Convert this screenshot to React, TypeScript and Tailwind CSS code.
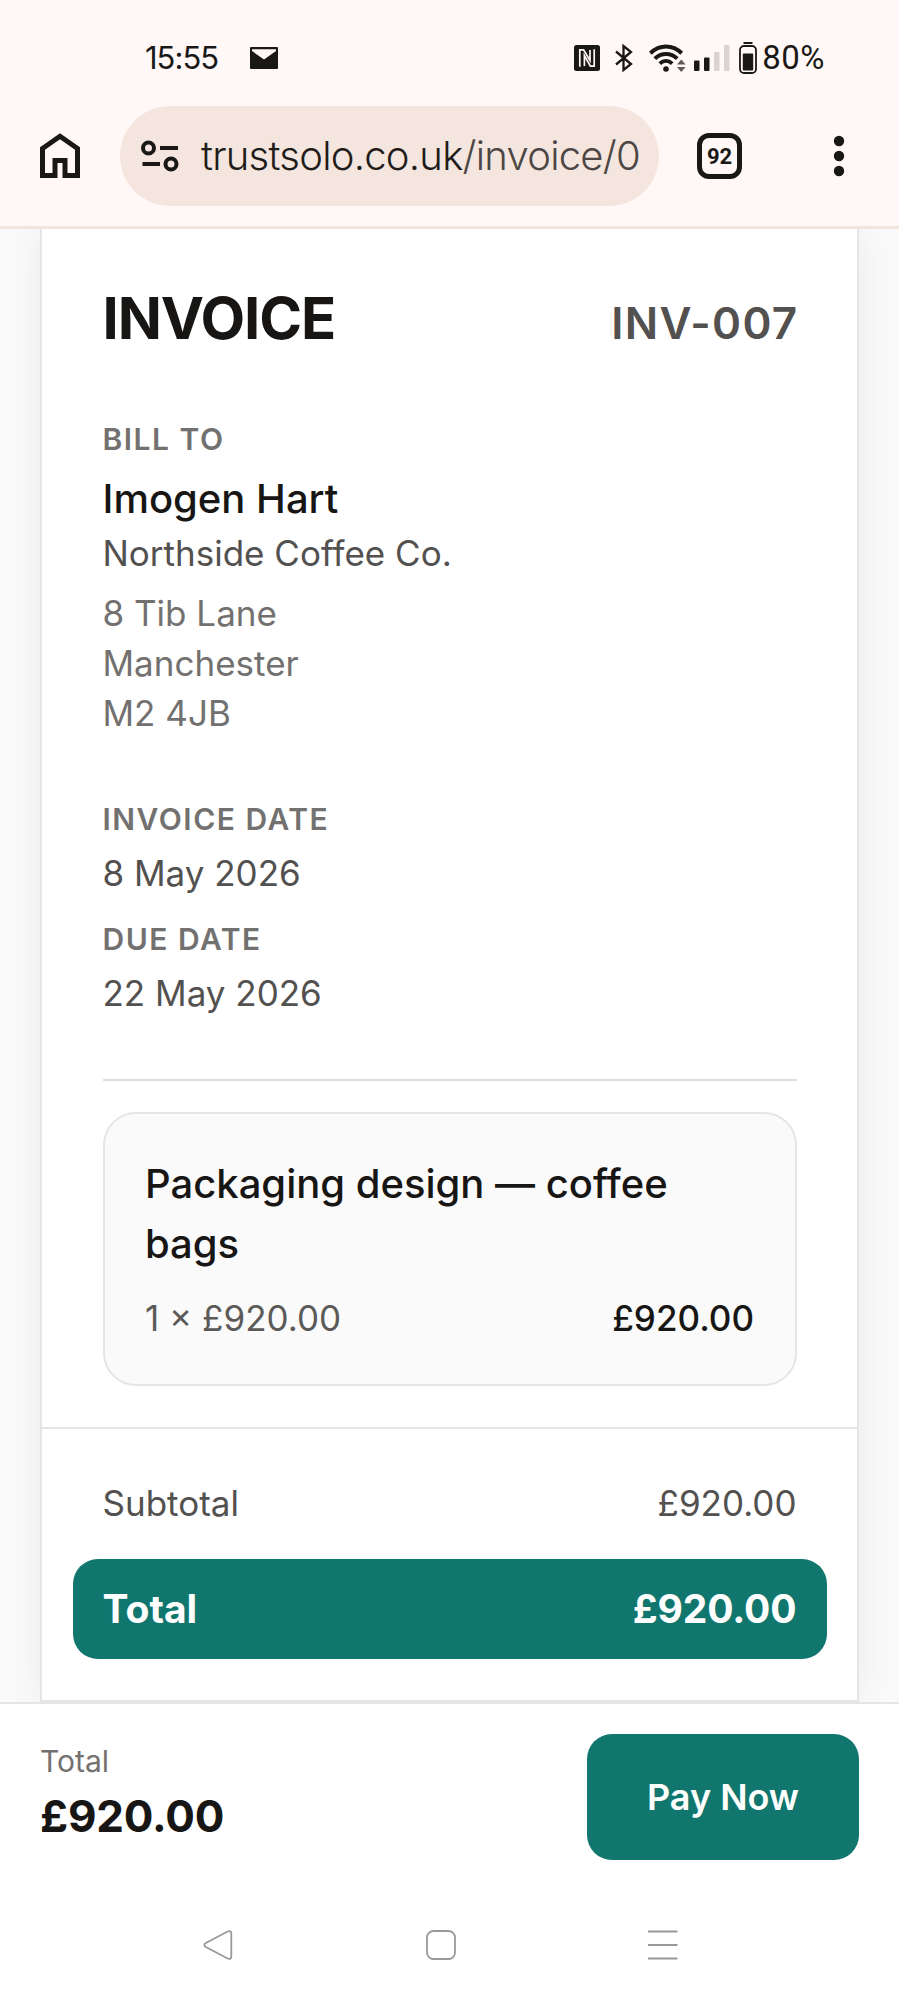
import type { ReactNode } from "react";

const addressLines = ["8 Tib Lane", "Manchester", "M2 4JB"];

const dates = [
  { label: "Invoice date", value: "8 May 2026" },
  { label: "Due date", value: "22 May 2026" },
];

const Label = ({ children, className = "" }: { children: ReactNode; className?: string }) => (
  <p className={`text-[30px] leading-10 font-semibold tracking-[1.5px] uppercase text-[#737170] ${className}`}>{children}</p>
);

const StatusBar = () => (
  <div className="flex items-center h-[106px] pt-[9px] pl-[145px] pr-[74px] text-[#1a1816]">
    <span className="w-[105px] text-[31px] leading-9 tracking-[-1px]">15:55</span>
    <svg className="w-7 h-[22px]" viewBox="0 0 28 22">
      <rect width="28" height="22" rx="1" fill="currentColor" />
      <path d="M2 2.2H26V4L14 12.5L2 4Z" fill="#fff8f6" />
    </svg>
    <div className="ml-auto flex items-center">
      {/* nfc */}
      <svg className="w-[26px] h-[26px]" viewBox="0 0 26 26">
        <rect width="26" height="26" rx="2.5" fill="currentColor" />
        <path d="M5.8 21.8V4.8H9.6L16 15.5V5M10.4 21V10.5L16.4 21.2H20.2V4.2" fill="none" stroke="#fff8f6" strokeWidth="1.7" />
      </svg>
      {/* bluetooth */}
      <svg className="ml-[15px] w-[18px] h-7" viewBox="0 0 18 28" fill="none" stroke="currentColor" strokeWidth="2.3">
        <path d="M1 7.5L16 20L8.5 26V2L16 8L1 20.5" />
      </svg>
      {/* wifi with data arrows */}
      <svg className="ml-4 w-[37px] h-7" viewBox="0 0 37 28" fill="none" stroke="currentColor" strokeWidth="4">
        <path d="M1.3 9.2C10.5 0.2 23.5 0.2 32.7 9.2" />
        <path d="M5.8 14.6C12.3 8.3 21.7 8.3 28.2 14.6" />
        <path d="M10.8 19.6C14.5 16.2 19.5 16.2 23.2 19.6" />
        <circle cx="17" cy="25" r="2.8" fill="currentColor" stroke="none" />
        <path d="M28 20.5L32.3 15.5L36.6 20.5ZM28 23L32.3 28L36.6 23Z" fill="#5f5a58" stroke="none" />
      </svg>
      {/* signal */}
      <svg className="ml-2 w-9 h-[26px]" viewBox="0 0 36 26" fill="currentColor">
        <rect y="15.5" width="5.5" height="10.5" rx="1" />
        <rect x="10" y="12.5" width="5.5" height="13.5" rx="1" />
        <rect x="20" y="7" width="5.5" height="19" rx="1" fill="#d9d4d2" />
        <rect x="30" width="5.5" height="26" rx="1" fill="#d9d4d2" />
      </svg>
      {/* battery */}
      <svg className="ml-[9px] w-[18px] h-8" viewBox="0 0 18 32">
        <rect x="4.5" width="9" height="2" fill="currentColor" />
        <rect x="1" y="4" width="16" height="27" rx="4" fill="none" stroke="currentColor" strokeWidth="1.8" />
        <rect x="3.8" y="11.5" width="10.4" height="17" rx="1" fill="currentColor" />
      </svg>
      <span className="ml-[5px] font-[Roboto] text-[33px] leading-9 tracking-[0.5px]">80%</span>
    </div>
  </div>
);

const AddressBar = () => (
  <div className="flex items-center h-[100px] text-[#1a1816]">
    <svg className="ml-10 w-10 h-[46px]" viewBox="0 0 40 46" fill="none" stroke="currentColor" strokeWidth="5">
      <path d="M2.5 42.5V15.5L20 3.2L37.5 15.5V42.5H25V27.5H15V42.5Z" />
    </svg>
    <div className="ml-10 flex items-center w-[539px] h-[100px] rounded-full bg-[#f5e5df] pl-[21px]">
      <svg className="w-[38px] h-8" viewBox="0 0 38 32" fill="none" stroke="currentColor" strokeWidth="4">
        <circle cx="7.5" cy="8" r="5.5" />
        <path d="M19 8H37M1.5 24H19" />
        <circle cx="30" cy="24" r="5.5" />
      </svg>
      <span className="ml-[22px] text-[40px] leading-[60px] font-light tracking-[-0.75px] whitespace-nowrap text-[#1f1c1a]">
        trustsolo.co.uk<span className="text-[#4c4644]">/invoice/0</span>
      </span>
    </div>
    <div className="ml-[38px] flex items-center justify-center w-[45px] h-[46px] rounded-[12px] border-[5px] border-[#1a1816] pt-px font-[Roboto] text-[22px] font-bold">
      92
    </div>
    <svg className="ml-[91px] w-3 h-[42px]" viewBox="0 0 12 42" fill="currentColor">
      <circle cx="6" cy="6" r="5.2" />
      <circle cx="6" cy="21" r="5.2" />
      <circle cx="6" cy="36" r="5.2" />
    </svg>
  </div>
);

const InvoiceCard = () => (
  <article className="mx-10 h-full border-x-2 border-b-2 border-[#e5e5e5] bg-white pt-[59px] shadow-[0_0_38px_rgba(0,0,0,0.065)]">
    <div className="px-[60.5px]">
      <div className="flex items-baseline justify-between h-[60px]">
        <h1 className="text-[58px] leading-[60px] font-bold tracking-[-1.15px] text-[#171614]">INVOICE</h1>
        <span className="-mr-[2px] text-[44px] leading-[60px] font-semibold tracking-[1.3px] text-[#53514f]">INV-007</span>
      </div>

      <Label className="mt-[71px]">Bill to</Label>
      <p className="mt-[10px] text-[40px] leading-[60px] font-medium text-[#171614]">Imogen Hart</p>
      <p className="-mt-px text-[35px] leading-[50px] text-[#53514f]">Northside Coffee Co.</p>
      <address className="mt-[10px] text-[35px] leading-[50px] not-italic text-[#737170]">
        {addressLines.map((line) => (
          <p key={line}>{line}</p>
        ))}
      </address>

      <dl className="mt-[61px] flex flex-col gap-[21px]">
        {dates.map(({ label, value }) => (
          <div key={label}>
            <dt><Label>{label}</Label></dt>
            <dd className="mt-[9px] text-[35px] leading-[50px] text-[#53514f]">{value}</dd>
          </div>
        ))}
      </dl>

      <hr className="mt-[61px] border-t-2 border-[#dedede]" />

      <section className="mt-[31px] h-[274px] rounded-[33px] border-2 border-[#e5e5e5] bg-[#fafafa] px-[40.5px] pt-10">
        <h2 className="text-[40px] leading-[60px] font-medium text-[#171614]">Packaging design — coffee bags</h2>
        <div className="mt-[19px] flex justify-between text-[35px] leading-[50px]">
          <span className="text-[#5c5a58]">1 × £920.00</span>
          <span className="font-medium text-[#171614]">£920.00</span>
        </div>
      </section>
    </div>

    <hr className="mt-[41px] border-t-2 border-[#e5e5e5]" />

    <div className="mt-[49px] flex justify-between px-[60.5px] text-[35px] leading-[50px] text-[#53514f]">
      <span>Subtotal</span>
      <span>£920.00</span>
    </div>
    <div className="mt-[31px] mx-[30.5px] flex items-center justify-between h-[100px] rounded-[25px] bg-[#10766e] px-[30px] text-[39px] font-bold text-white">
      <span>Total</span>
      <span className="tracking-[-0.1px]">£920.00</span>
    </div>
  </article>
);

const PayBar = () => (
  <div className="flex items-center justify-between h-[188px] border-t-2 border-[#e5e5e5] bg-white px-10">
    <div className="pb-[6px]">
      <p className="text-[30px] leading-10 text-[#737170]">Total</p>
      <p className="mt-1 text-[44px] leading-[62px] font-bold tracking-[-0.2px] text-[#171614]">£920.00</p>
    </div>
    <button className="w-[272px] h-[126px] rounded-[25px] bg-[#10766e] text-[36px] font-semibold text-white">Pay Now</button>
  </div>
);

const SystemNav = () => (
  <nav className="flex items-start h-[110px] pt-10 pl-[203px] bg-white">
    <svg className="w-[30px] h-[30px]" viewBox="0 0 30 30" fill="none" stroke="#999" strokeWidth="1.8">
      <path d="M2.4 13.3L24.6 1.5Q28.3 0.3 28.3 3.5V26.5Q28.3 29.7 24.6 28.5L2.4 16.7Q0.2 15 2.4 13.3Z" />
    </svg>
    <svg className="ml-[193px] w-[30px] h-[30px]" viewBox="0 0 30 30" fill="none" stroke="#999" strokeWidth="1.8">
      <rect x="1" y="1" width="28" height="28" rx="6.5" />
    </svg>
    <svg className="ml-[192px] w-[30px] h-[30px]" viewBox="0 0 30 30" stroke="#999" strokeWidth="2.2">
      <path d="M0 1.5H29.5M0 15H29.5M0 28.5H29.5" />
    </svg>
  </nav>
);

const App = () => {
  return (
    <div className="flex flex-col h-[2000px] w-full overflow-hidden bg-[#fafafa] font-[Inter,'Liberation_Sans',sans-serif]">
      <header className="relative shrink-0 h-[229px] border-b-[3px] border-[#f3e4df] bg-[#fff8f6]">
        <StatusBar />
        <AddressBar />
      </header>
      <main className="h-[1473px] shrink-0">
        <InvoiceCard />
      </main>
      <footer className="relative shrink-0">
        <PayBar />
        <SystemNav />
      </footer>
    </div>
  )
}

export default App
